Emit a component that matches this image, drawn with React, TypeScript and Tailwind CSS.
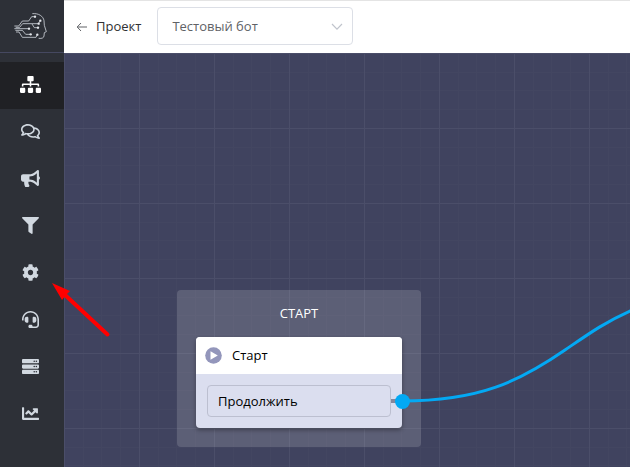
import React from "react";
import {
  FaSitemap,
  FaRegComments,
  FaBullhorn,
  FaFilter,
  FaCog,
  FaHeadset,
  FaServer,
  FaChartLine,
} from "react-icons/fa";

const navItems = [
  { label: "Сценарии", Icon: FaSitemap, size: "h-[17px] w-[21px]", active: true },
  { label: "Диалоги", Icon: FaRegComments, size: "h-[17px] w-[19px]" },
  { label: "Рассылки", Icon: FaBullhorn, size: "h-[17px] w-[19px]" },
  { label: "Воронки", Icon: FaFilter, size: "h-[17px] w-[17px]" },
  { label: "Настройки", Icon: FaCog, size: "h-[17px] w-[17px]" },
  { label: "Поддержка", Icon: FaHeadset, size: "h-[17px] w-[17px]" },
  { label: "Данные", Icon: FaServer, size: "h-[17px] w-[17px]" },
  { label: "Статистика", Icon: FaChartLine, size: "h-[17px] w-[17px]" },
];

function Logo() {
  return (
    <svg width="35" height="28" viewBox="39 36 105 84" fill="none" stroke="#d3d8df" strokeWidth="2.4" aria-hidden="true">
      <path d="M97 41 C116 39 130 49 132 62 L133 76 L139 95 L133 98 L132 108 C131 114 126 116 116 115" />
      <path d="M104 50 H95 L86 63 H67 L56 78 H43" />
      <path d="M121 62 L115 71 H68 L59 82 H47" />
      <path d="M87 86 H43" />
      <path d="M113 83 H103 L96 72" />
      <path d="M91 103 H77 L67 91 H46" />
      <path d="M112 104 L108 112 H67 L57 96 H48" />
      <g fill="#e3e6eb" stroke="none">
        <circle cx="105" cy="50" r="3.5" />
        <circle cx="121" cy="62" r="3.5" />
        <circle cx="116" cy="71" r="3.5" />
        <circle cx="87" cy="86" r="3.5" />
        <circle cx="114" cy="83" r="3.5" />
        <circle cx="92" cy="103" r="3.5" />
        <circle cx="112" cy="104" r="3.5" />
      </g>
    </svg>
  );
}

function Sidebar() {
  return (
    <aside className="w-16 shrink-0 bg-[#2d3037]">
      <div className="flex h-[53px] items-center border-b border-[#454860] pl-[13px]">
        <Logo />
      </div>
      <nav className="mt-[9px] flex flex-col">
        {navItems.map(({ label, Icon, size, active }) => (
          <button
            key={label}
            aria-label={label}
            className={
              active
                ? "flex h-[47px] items-center justify-center bg-[#202125] pr-[3px] pb-0.5 text-white"
                : "flex h-[47px] items-center justify-center pr-[3px] pb-0.5 text-[#d1d8e0]"
            }
          >
            <Icon className={size} />
          </button>
        ))}
      </nav>
    </aside>
  );
}

function Header() {
  return (
    <header className="flex h-[53px] items-center border-t border-[#e4e4e4] bg-white pl-3">
      <a href="#" className="flex items-center gap-2 text-[#303133]">
        <svg width="12" height="12" viewBox="0 0 12 12" fill="none" stroke="#606266" aria-hidden="true">
          <path d="M11 6 H1.500 M5 2 L1.200 6 L5 10" />
        </svg>
        Проект
      </a>
      <div className="relative mb-0.5 ml-4 w-[196px]">
        <select
          aria-label="Бот"
          className="h-[38px] w-full appearance-none rounded border border-[#dcdfe6] bg-white px-3.5 pt-0.5 text-[#606266]"
        >
          <option>Тестовый бот</option>
        </select>
        <svg className="pointer-events-none absolute top-4 right-2.5" width="12" height="8" viewBox="0 0 12 8" fill="none" stroke="#c0c4cc" strokeWidth="1.2" aria-hidden="true">
          <path d="M1 1 L6 6.200 L11 1" />
        </svg>
      </div>
    </header>
  );
}

function StartNode() {
  return (
    <section className="absolute top-[237px] left-[113px] w-[244px] rounded bg-white/15 px-[19px] pb-[19px]">
      <h2 className="flex h-[47px] items-center justify-center text-white">СТАРТ</h2>
      <div className="rounded bg-[#dbdeef] shadow-[0_2px_4px_rgba(0,0,0,0.35)]">
        <div className="flex h-[37px] items-center gap-2.5 rounded-t bg-white pl-[9px] text-black">
          <svg width="17" height="17" viewBox="0 0 17 17" aria-hidden="true">
            <circle cx="8.5" cy="8.5" r="8.3" fill="#9396bb" />
            <path d="M5.500 4.300 L12.800 8.500 L5.500 12.700 Z" fill="#fff" />
          </svg>
          Старт
        </div>
        <div className="p-[11px]">
          <button className="block h-8 w-[184px] rounded border border-[#bcbfd0] px-2.5 pt-0.5 text-left text-black">
            Продолжить
          </button>
        </div>
      </div>
    </section>
  );
}

function Canvas() {
  return (
    <main className="relative flex-1 overflow-hidden bg-[#40435f] bg-[linear-gradient(to_right,#4b4e69_1px,transparent_1px),linear-gradient(to_bottom,#4b4e69_1px,transparent_1px),linear-gradient(to_right,transparent_19px,#434661_19px,#434661_20px,transparent_20px,transparent_37px,#434661_37px,#434661_38px,transparent_38px,transparent_56px,#434661_56px,#434661_57px,transparent_57px),linear-gradient(to_bottom,transparent_19px,#434661_19px,#434661_20px,transparent_20px,transparent_37px,#434661_37px,#434661_38px,transparent_38px,transparent_56px,#434661_56px,#434661_57px,transparent_57px)] bg-[size:75px_75px]">
      <StartNode />
      <svg className="pointer-events-none absolute top-0 left-0" width="720" height="414" fill="none" aria-hidden="true">
        <path d="M327 348 H334" stroke="#85889c" strokeWidth="4" />
        <path d="M338 348 C416 348 456 328 501 297 C523 282 541 269 566 258 C600 244 640 237 706 237" stroke="#03a9f4" strokeWidth="3" />
        <circle cx="338.5" cy="348.5" r="7.5" fill="#03a9f4" />
      </svg>
    </main>
  );
}

export default function App() {
  return (
    <div className="relative flex min-h-screen font-['Open_Sans','Noto_Sans',sans-serif] text-[13px]">
      <Sidebar />
      <div className="flex min-w-0 flex-1 flex-col">
        <Header />
        <Canvas />
      </div>
      <svg className="pointer-events-none absolute top-[283px] left-[52px]" width="60" height="56" aria-hidden="true">
        <path d="M12 11 L55.500 51.500" stroke="#f00" strokeWidth="4" strokeLinecap="round" />
        <path d="M0 0 L18 8 L14 12 L10 17 Z" fill="#f00" />
      </svg>
    </div>
  );
}
